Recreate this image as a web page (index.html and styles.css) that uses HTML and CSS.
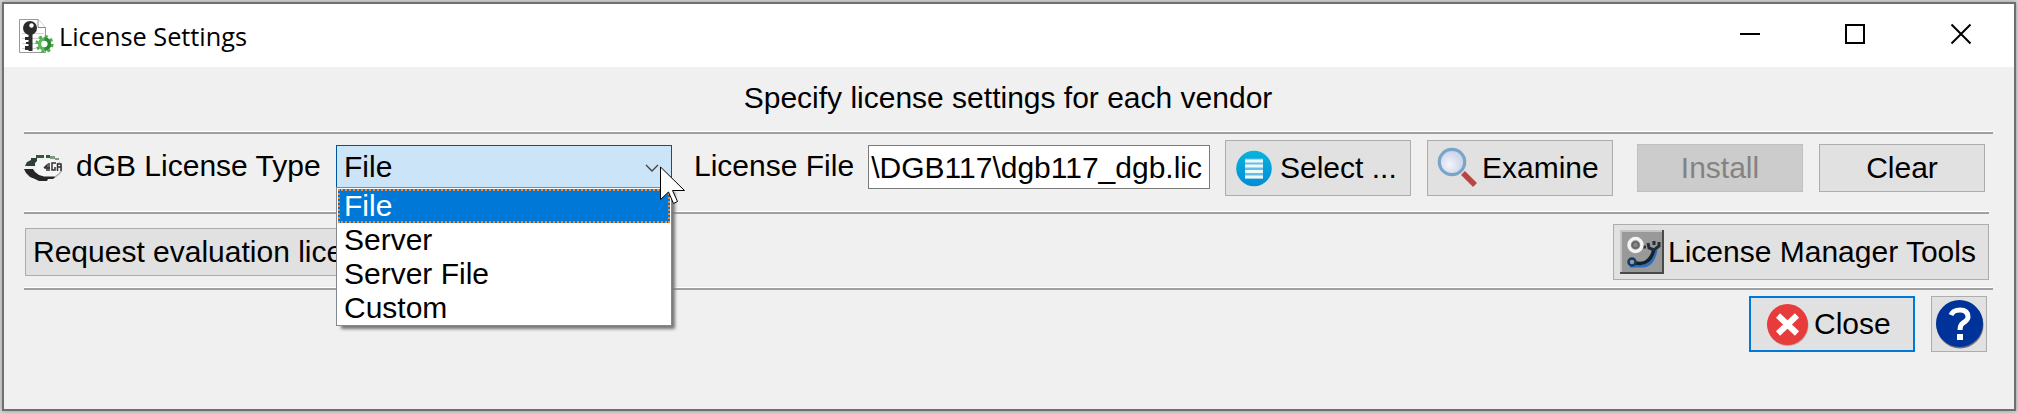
FILE: index.html
```
<!DOCTYPE html>
<html lang="en">
<head>
<meta charset="utf-8">
<title>License Settings</title>
<link rel="stylesheet" href="styles.css">
</head>
<body>
<div class="window">
  <header class="titlebar">
    <svg class="app-icon" width="36" height="36" viewBox="0 0 36 36">
      <path d="M1.500 1.500H20L27.500 9.500V34.500H1.500Z" fill="#fff" stroke="#999"/>
      <path d="M20 1.500V9.500H27.500" fill="#fff" stroke="#888"/>
      <path d="M4 15.500H26M4 20.500H24M4 25.500H18M4 30.500H18" stroke="#d0d0d0"/>
      <circle cx="12" cy="10" r="7" fill="#2b2b2b"/>
      <circle cx="13.500" cy="7.500" r="2.200" fill="#fff"/>
      <path d="M10.500 16H14.500V33H10.500ZM7 19H11V22H7ZM8 24H11V26H8ZM7 28H11V32H7Z" fill="#2b2b2b"/>
      <circle cx="26.500" cy="26" r="7.600" fill="none" stroke="#4fae4f" stroke-width="3" stroke-dasharray="3 2.970"/>
      <circle cx="26.500" cy="26" r="5" fill="#fff" stroke="#5cb85c" stroke-width="3.500"/>
      <path d="M26.500 21A5 5 0 0 1 26.500 31" fill="none" stroke="#2c8a34" stroke-width="3.500"/>
    </svg>
    <h1 class="title">License Settings</h1>
    <svg class="caption" width="232" height="22" viewBox="0 0 232 22" fill="none" stroke="#000" stroke-width="2">
      <path d="M0 11H20"/>
      <path d="M106 2H124V20H106Z"/>
      <path d="M211.500 1.500L230.500 20.500M230.500 1.500L211.500 20.500"/>
    </svg>
  </header>
  <main class="content">
    <p class="heading">Specify license settings for each vendor</p>
    <hr class="rule">
    <section class="row vendor">
      <svg class="vendor-icon" width="40" height="28" viewBox="0 0 40 28">
        <path d="M13 6H30L36 10V20L31 23H17L12 17Z" fill="#f7f7f7"/>
        <path d="M1 12L3 8L7 6V4H13V7L11 9V12Z" fill="#2f4034"/>
        <path d="M12 1H20V4H12ZM22 1H26V4H22Z" fill="#305c3c"/>
        <path d="M26 2H31V5H26ZM31 4H35V6H31Z" fill="#7e9a84"/>
        <path d="M0 15H9L11 18L15 21L20 22.500H32L29 25H24L23 27H15L11 25L6 23L2 19Z" fill="#262626"/>
        <path d="M35 8L37.500 12V17L35 20L31 23" fill="none" stroke="#aaa" stroke-width="1.200"/>
        <path d="M20 14L23 11V17M20 14H26M25 9V17M32 9H28V16H31V13M33.500 9V17M33.500 10H37V13H34M37 13V17" fill="none" stroke="#333" stroke-width="1.500"/>
      </svg>
      <span class="type-label">dGB License Type</span>
      <div class="combo">
        <span>File</span>
        <svg class="chevron" width="14" height="8" viewBox="0 0 14 8"><path d="M1 1L7 7L13 1" fill="none" stroke="#444" stroke-width="1.400"/></svg>
        <ul class="options">
          <li class="option selected">File</li>
          <li class="option">Server</li>
          <li class="option">Server File</li>
          <li class="option">Custom</li>
        </ul>
        <svg class="pointer" width="26" height="40" viewBox="0 0 26 40"><path d="M.5 1V33.500L8.500 26L13.500 37.500L17.500 35.500L12.500 24.500H24.500Z" fill="#fff" stroke="#000"/></svg>
      </div>
      <span class="file-label">License File</span>
      <div class="field">\DGB117\dgb117_dgb.lic</div>
      <button class="button select">
        <svg width="36" height="38" viewBox="0 0 36 38">
          <defs><linearGradient id="disc" x2="0" y2="1"><stop stop-color="#08b4dc"/><stop offset="1" stop-color="#008cd6"/></linearGradient></defs>
          <circle cx="18" cy="19.500" r="17.800" fill="url(#disc)"/>
          <path d="M9 9.500H27V29.500H9Z" fill="#64bfe4"/>
          <path d="M9 12H27M9 17H27M9 22.500H27M9 28H27" stroke="#eef8fc" stroke-width="3"/>
        </svg>
        Select ...
      </button>
      <button class="button examine">
        <svg width="42" height="42" viewBox="0 0 42 42">
          <defs><radialGradient id="glass" cx=".4" cy=".6"><stop stop-color="#f4f5fb"/><stop offset="1" stop-color="#cfd6ea"/></radialGradient></defs>
          <path d="M26 26L38 38" stroke="#b94444" stroke-width="5.500"/>
          <circle cx="15" cy="15" r="12.700" fill="url(#glass)" stroke="#79a6c8" stroke-width="3.200"/>
        </svg>
        Examine
      </button>
      <button class="button install" disabled>Install</button>
      <button class="button clear">Clear</button>
    </section>
    <hr class="rule short">
    <section class="row tools">
      <button class="button request">Request evaluation license</button>
      <button class="button manager">
        <svg width="44" height="44" viewBox="0 0 44 44">
          <path d="M0 0H44V44H0Z" fill="#999"/>
          <path d="M0 1H44M1 0V44" stroke="#c4c4c4" stroke-width="2"/>
          <path d="M0 43H44M43 0V44" stroke="#4a4a4a" stroke-width="2"/>
          <path d="M21 17H26" stroke="#333" stroke-width="3"/>
          <circle cx="15.500" cy="15" r="6.500" fill="#888" stroke="#f4f4f4" stroke-width="3.500"/>
          <circle cx="15.500" cy="15" r="3" fill="none" stroke="#666" stroke-width="1.500"/>
          <path d="M36 20Q33 36 22 36H10" fill="none" stroke="#2d6fbd" stroke-width="3"/>
          <path d="M34 19Q31 33 20 33.500L15 33" fill="none" stroke="#14202c" stroke-width="3.500"/>
          <path d="M28 13L29 18L34 20L39 16V12M34 11V15" fill="none" stroke="#222d38" stroke-width="3"/>
          <circle cx="12" cy="32" r="3.500" fill="#999" stroke="#123a68" stroke-width="2.500"/>
        </svg>
        License Manager Tools
      </button>
    </section>
    <hr class="rule">
    <footer class="row actions">
      <button class="button close">
        <svg width="44" height="44" viewBox="0 0 44 44">
          <circle cx="23" cy="23.500" r="20.500" fill="#888" opacity=".5"/>
          <circle cx="22.500" cy="22.500" r="20.500" fill="#e83c3c"/>
          <path d="M13 13.500L32 31.500M32 13.500L13 31.500" stroke="#fff" stroke-width="6"/>
        </svg>
        Close
      </button>
      <button class="button help">
        <svg width="50" height="50" viewBox="0 0 50 50">
          <circle cx="25" cy="26" r="23.500" fill="#555" opacity=".8"/>
          <circle cx="24.500" cy="24.500" r="23.500" fill="#003399"/>
          <path d="M16 16Q18 11 25 11Q33 11 33 18Q33 21 28 24Q25 26 25 31" fill="none" stroke="#fff" stroke-width="5"/>
          <path d="M22 35H28V41H22Z" fill="#fff"/>
        </svg>
      </button>
    </footer>
  </main>
</div>
</body>
</html>
```
FILE: styles.css
```
* { box-sizing: border-box; }
body { margin: 0; padding: 2px; height: 414px; overflow: hidden; background: #d6d6d6; font: 30px/34px "Liberation Sans", Arial, sans-serif; color: #000; }
.window { width: 2014px; height: 409px; border: 2px solid #6f6f6f; background: #f0f0f0; box-shadow: 0 0 5px #999; }
.titlebar { display: flex; align-items: center; height: 63px; padding: 0 42px 0 14px; background: #fff; }
.title { margin: 1px 0 0 5px; font: 25.3px/34px "Open Sans", sans-serif; white-space: nowrap; }
.caption { margin: -3px 0 0 auto; }
.content { padding-left: 20px; }
.heading { margin: 0; height: 64px; padding-top: 14px; width: 1968px; text-align: center; }
.rule { width: 1969px; height: 3px; margin: 0; border: 0; border-top: 1px solid #fff; background: #a0a0a0; }
.short { width: 1965px; }
.row { display: flex; white-space: nowrap; }
.vendor { height: 77px; padding-top: 6px; }
.vendor-icon { margin-top: 14px; }
.type-label { width: 260px; margin: 9px 0 0 12px; }
.combo { position: relative; width: 336px; height: 44px; margin-top: 5px; padding: 4px 7px; background: #cce4f7; border: 1px solid #005499; }
.chevron { position: absolute; right: 12px; top: 18px; }
.options { position: absolute; z-index: 1; top: 41px; left: -1px; width: 336px; height: 139px; margin: 0; padding: 1px; list-style: none; background: #fff; border: 1px solid #828790; box-shadow: 4px 4px 3px -1px #777; }
.option { height: 34px; padding-left: 6px; }
.selected { padding-left: 4px; line-height: 30px; color: #fff; background: #0078d7; border: 2px dotted #ff8728; }
.pointer { position: absolute; z-index: 2; left: 323px; top: 20px; }
.file-label { width: 174px; margin: 9px 0 0 22px; }
.field { width: 342px; height: 44px; margin-top: 5px; padding: 5px 7px 0 0; overflow: hidden; display: flex; justify-content: flex-end; background: #fff; border: 1px solid #7a7a7a; }
.button { display: flex; align-items: center; height: 56px; margin: 0; padding: 0; font: inherit; color: #000; white-space: nowrap; background: #e1e1e1; border: 1px solid #adadad; }
.select { width: 186px; margin-left: 15px; padding-left: 10px; gap: 8px; }
.examine { width: 186px; margin-left: 16px; padding-left: 9px; gap: 3px; }
.install, .clear { width: 166px; height: 48px; margin-top: 4px; justify-content: center; }
.install { margin-left: 24px; color: #838383; background: #ccc; border-color: #bfbfbf; }
.clear { margin-left: 16px; }
.tools { height: 73px; padding-top: 10px; }
.request { width: 380px; height: 48px; margin: 4px 0 0 1px; padding-left: 7px; }
.manager { width: 376px; margin-left: 1208px; padding-left: 6px; gap: 4px; }
.actions { padding-top: 6px; gap: 16px; }
.close { width: 166px; margin-left: 1725px; padding-left: 14px; gap: 5px; border: 2px solid #0078d7; }
.help { width: 56px; padding-left: 3px; }
```
